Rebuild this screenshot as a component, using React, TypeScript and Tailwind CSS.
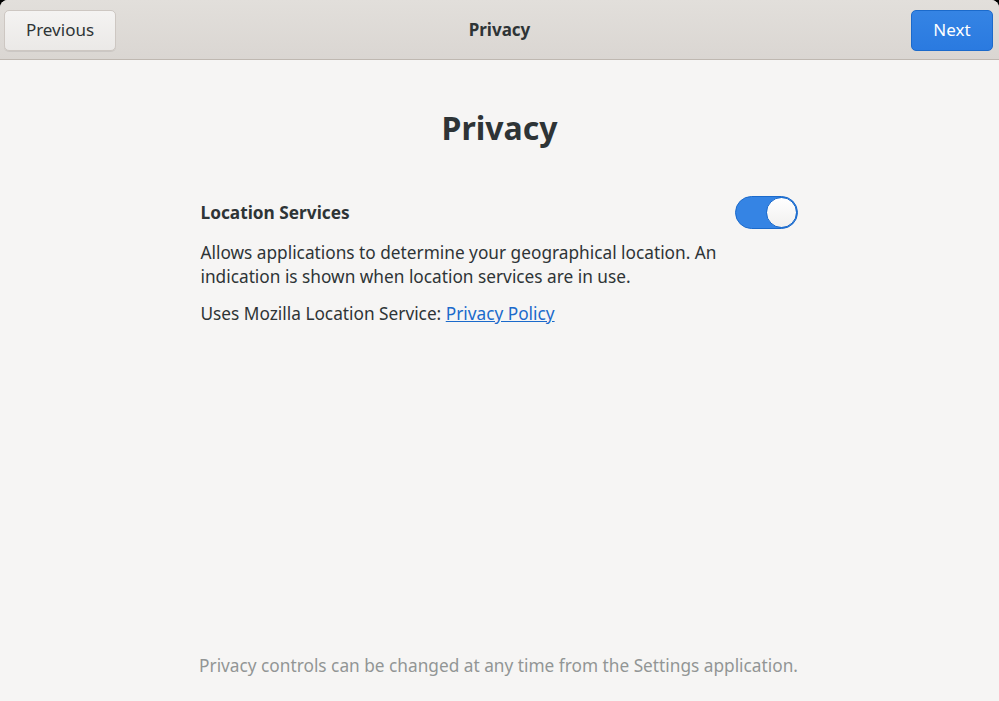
export default function App() {
  return (
    <div className="w-[999px] h-[701px] overflow-hidden bg-black font-['Noto_Sans',sans-serif]">
      <div className="flex flex-col h-full rounded-t-[8px] overflow-hidden bg-[#f6f5f4]">
        {/* Header bar */}
        <div className="relative flex items-center justify-between h-[60px] px-[4px] pt-[1px] bg-gradient-to-b from-[#e2dfdb] to-[#dad6d2] border-b border-[#bfb8b1]">
          <button className="h-[41px] w-[112px] rounded-[5px] border border-[#cdc7c2] bg-gradient-to-b from-[#f4f3f2] to-[#ebe9e7] text-[17px] text-[#2e3436] shadow-[0_1px_0_rgba(0,0,0,0.07)]">
            Previous
          </button>
          <div className="absolute left-0 right-0 text-center pointer-events-none text-[17px] font-bold text-[#2e3436]">Privacy</div>
          <button className="h-[41px] w-[82px] mr-[2px] rounded-[5px] border border-[#1b6acb] bg-gradient-to-b from-[#3584e4] to-[#2a7ae0] text-[17px] text-white">
            Next
          </button>
        </div>

        {/* Body */}
        <div className="flex-1 flex flex-col items-center">
          <h1 className="mt-[48px] text-[32px] leading-[40px] font-bold text-[#2e3436]">Privacy</h1>
          <div className="w-[598px] mt-[48px] pr-[1px] text-[#2e3436]">
            <div className="flex items-center justify-between">
              <div className="text-[17.25px] font-bold">Location Services</div>
              <div className="flex items-center w-[63px] h-[33px] rounded-full bg-[#3584e4] border border-[#1b6acb] justify-end">
                <div className="w-[31px] h-[31px] rounded-full bg-gradient-to-b from-white to-[#f1f0ef] border border-[#1b6acb]" />
              </div>
            </div>
            <p className="mt-[12px] w-[540px] text-[17.25px] leading-[24px]">
              Allows applications to determine your geographical location. An indication is shown when location services are in use.
            </p>
            <p className="mt-[13px] text-[17.25px] leading-[24px]">
              Uses Mozilla Location Service: <span className="text-[#1b6acb] underline">Privacy Policy</span>
            </p>
          </div>
          <div className="flex-1" />
          <div className="mb-[22px] mr-[2px] text-[17.25px] text-[#929595]">Privacy controls can be changed at any time from the Settings application.</div>
        </div>
      </div>
    </div>
  );
}
